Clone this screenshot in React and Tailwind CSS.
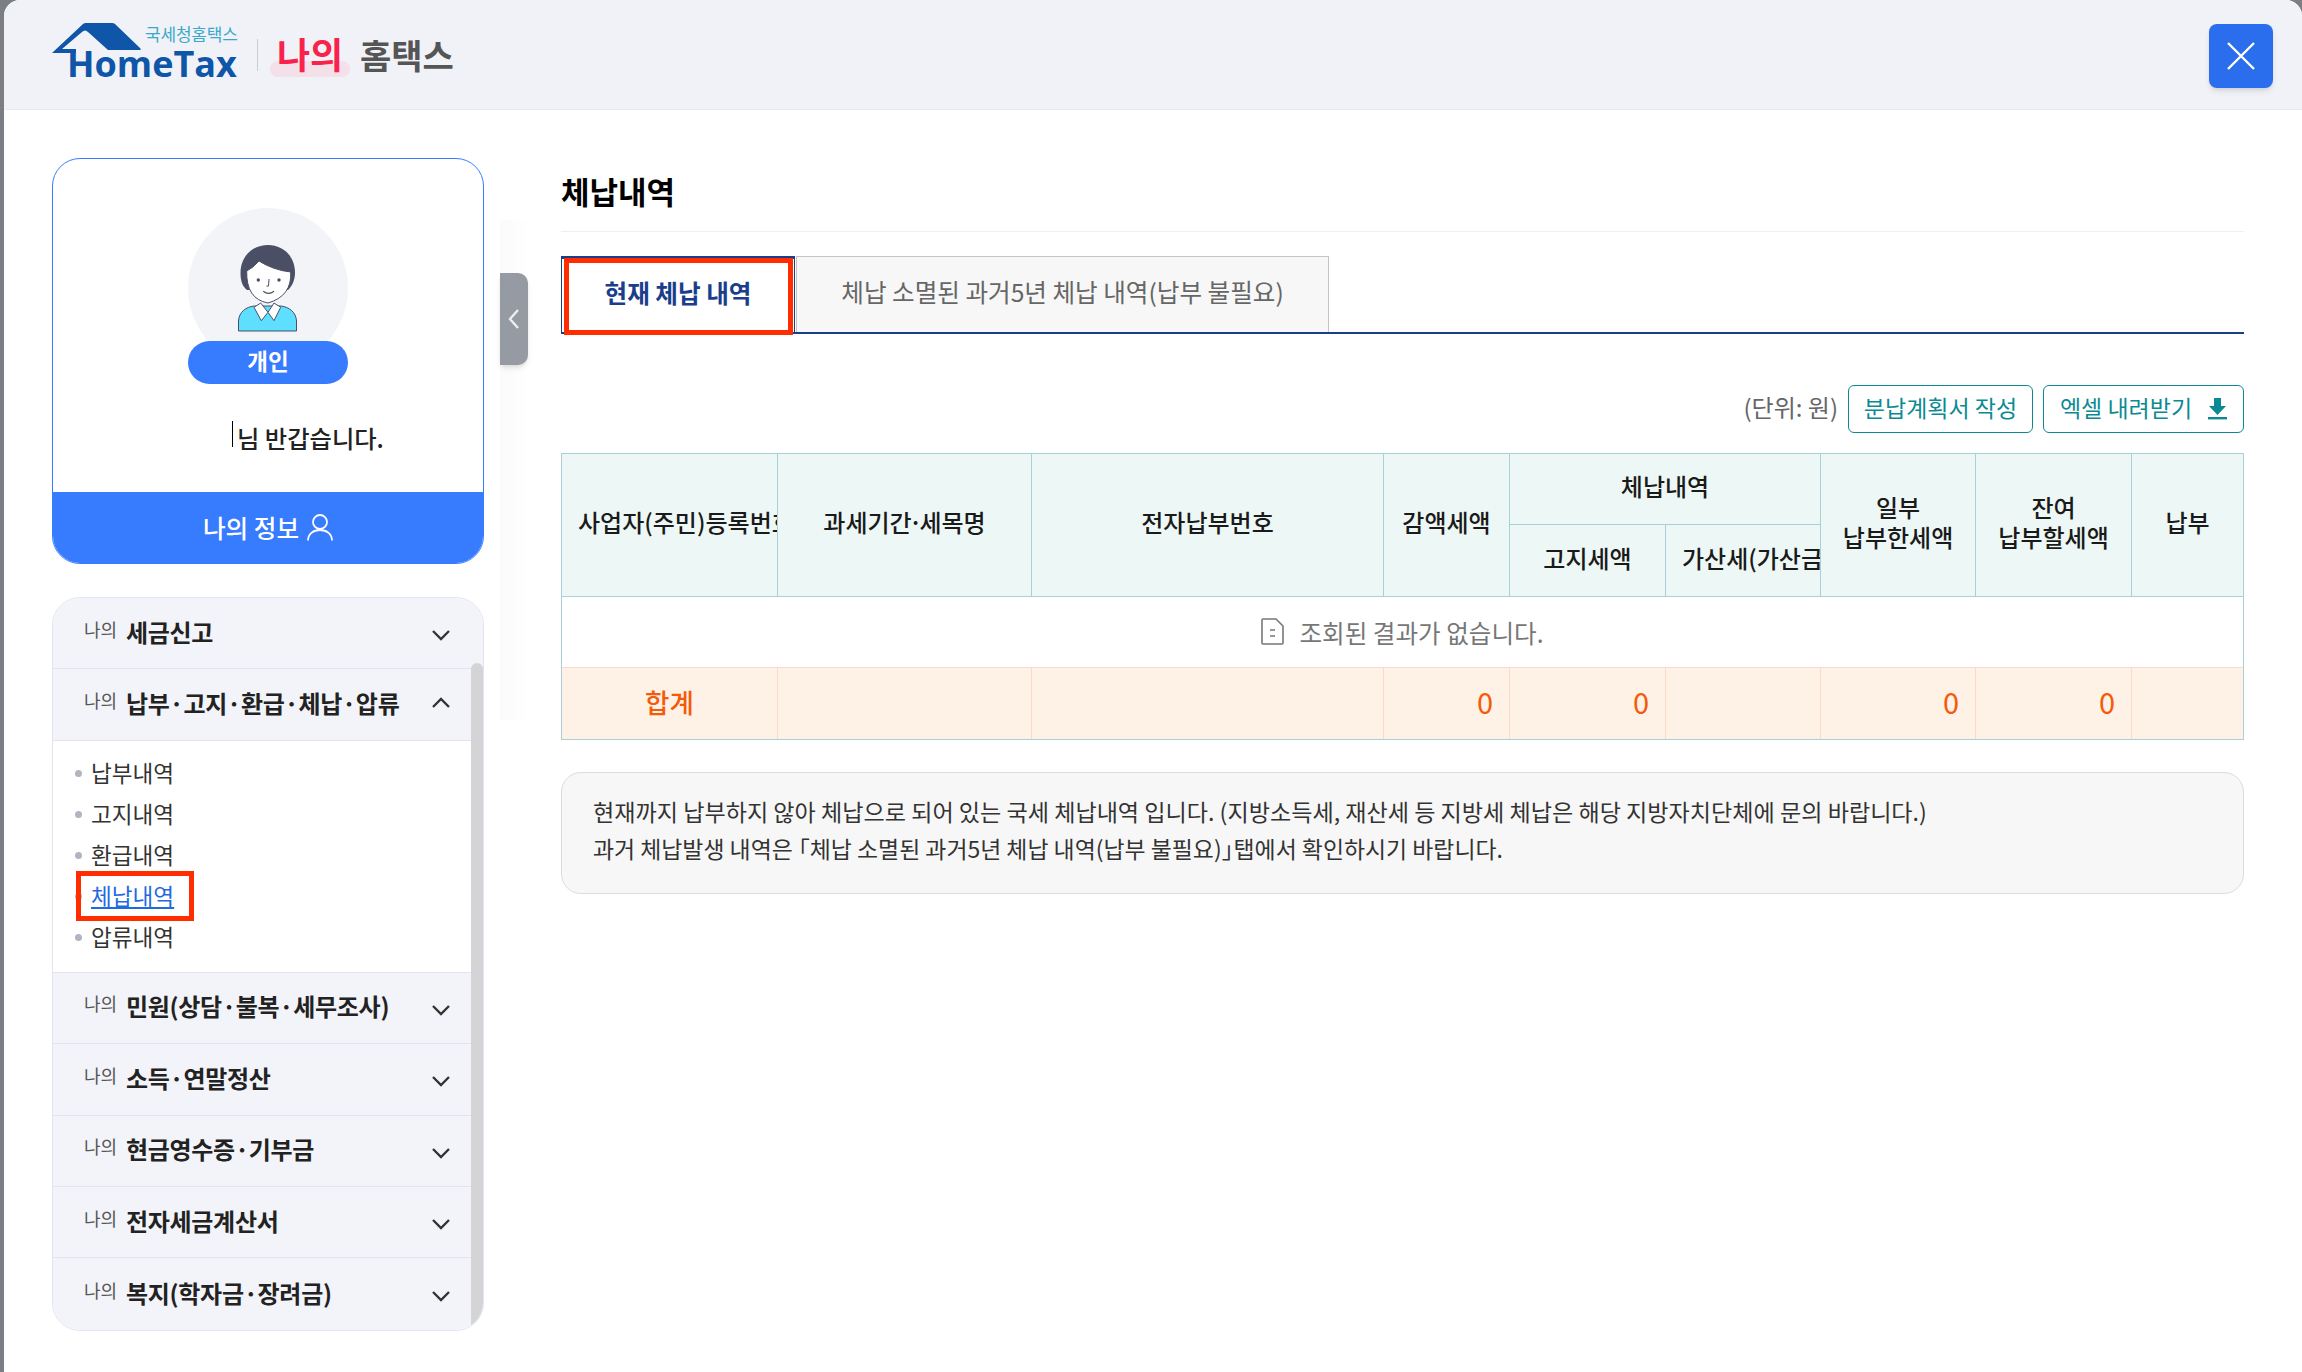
import React from 'react';

const menuBottom = [
  '민원(상담·불복·세무조사)',
  '소득·연말정산',
  '현금영수증·기부금',
  '전자세금계산서',
  '복지(학자금·장려금)',
];
const subItems = ['납부내역', '고지내역', '환급내역', '체납내역', '압류내역'];

const HouseLogo = () => (
  <svg width="92" height="32" viewBox="0 0 92 32" className="absolute left-0 top-0">
    <path
      d="M0 30 L31 1 Q32 0 34 0 H60 Q62 0 63 1 L88 25 Q90 27 87 27 H56 L36 9 Q33 6 30 9 L10 26 H24 V30 Z"
      fill="#0f55a8"
    />
  </svg>
);

const Logo = () => (
  <div className="flex items-center">
    <div className="relative w-[190px] h-[60px] -mt-[3px]">
      <HouseLogo />
      <span className="absolute left-[93px] top-[1px] text-[17px] leading-[20px] tracking-[-0.2px] text-[#3aa9c9] whitespace-nowrap">
        국세청홈택스
      </span>
      <span className="absolute left-[15px] top-[19px] text-[36px] leading-[44px] font-bold text-[#0f55a8] font-['Open_Sans',sans-serif]">
        HomeTax
      </span>
    </div>
    <div className="w-px h-[32px] bg-[#c9ccd2] ml-[15px]" />
    <div className="relative ml-[12px] w-[80px] h-[44px] flex justify-center">
      <div className="absolute left-0 bottom-0 w-[80px] h-[16px] rounded-full bg-[#f3e0e8]" />
      <span className="relative text-[36px] leading-[40px] font-bold text-[#f9224b]">나의</span>
    </div>
    <span className="ml-[10px] text-[34px] leading-[40px] font-bold text-[#555555]">홈택스</span>
  </div>
);

const Avatar = () => (
  <svg width="60" height="88" viewBox="0 0 60 88">
    <path d="M0.5 87 V77 C1 68 8 63 16 62 H43 C51 63 58 68 58.5 77 V87 Z" fill="#5fdfff" stroke="#4a4f66" strokeWidth="1" />
    <path d="M16 63.3 L22.7 59 L30 68.3 L23.3 76.7 Z" fill="#fff" stroke="#4a4f66" strokeWidth="1" />
    <path d="M42.7 63.3 L36 59 L30 68.3 L36 76.7 Z" fill="#fff" stroke="#4a4f66" strokeWidth="1" />
    <path d="M30 1 C15 1 2.5 12 2.5 29 C2.5 38 5 43 9 46 L50 46 C54 42 57 36 57 29 C57 12 45 1 30 1 Z" fill="#4a4f66" />
    <path d="M8.7 27 Q15 24 21 17 Q35 26 52.7 28 Q54 52 30 59 Q8 55 8.7 27 Z" fill="#fff" stroke="#4a4f66" strokeWidth="1" />
    <circle cx="20.3" cy="36" r="1.7" fill="#4a4f66" />
    <circle cx="41" cy="36" r="1.7" fill="#4a4f66" />
    <path d="M31 35 L30.5 42 H28.5" fill="none" stroke="#4a4f66" strokeWidth="1" />
    <path d="M25.3 47.3 Q30.5 51.5 36 47.3" fill="none" stroke="#4a4f66" strokeWidth="1.2" />
  </svg>
);

const UserIcon = () => (
  <svg width="26" height="27" viewBox="0 0 26 27" fill="none" stroke="#fff" strokeWidth="1.8">
    <circle cx="13" cy="8" r="7" />
    <path d="M1 26.5 C1 20 6 16 13 16 C20 16 25 20 25 26.5" />
  </svg>
);

const Chevron = ({ up }) => (
  <svg
    width="18"
    height="11"
    viewBox="0 0 18 11"
    fill="none"
    stroke="#333"
    strokeWidth="2.4"
    className={up ? '-mt-[2px] shrink-0' : 'mt-[8px] shrink-0'}
  >
    <path d={up ? 'M1 10 L9 2 L17 10' : 'M1 1 L9 9 L17 1'} />
  </svg>
);

const MenuRow = ({ title, open, last }) => (
  <div className={last ? 'h-[71.4px] pb-[3px] flex items-center justify-between pl-[31px] pr-[33px] bg-[#f2f4f9]' : 'h-[71.4px] pb-[3px] flex items-center justify-between pl-[31px] pr-[33px] bg-[#f2f4f9] border-b border-[#e2e5f0]'}>
    <div className="flex items-center">
      <span className="text-[18px] leading-[24px] text-[#555555] -mt-[6px] w-[42px] shrink-0">나의</span>
      <span className="text-[24px] leading-[32px] font-bold text-[#222222] whitespace-nowrap tracking-[-0.3px]">{title}</span>
    </div>
    <Chevron up={open} />
  </div>
);

const ProfileCard = () => (
  <div className="h-[406px] flex flex-col border border-[#377bff] rounded-[28px] overflow-hidden">
    <div className="flex flex-col items-center pt-[49px]">
      <div className="w-[160px] h-[160px] rounded-full bg-[#f3f4f8] flex justify-center pt-[36px]">
        <Avatar />
      </div>
      <div className="relative -mt-[27px] w-[160px] h-[43px] pb-[3px] rounded-full bg-[#377bff] flex items-center justify-center text-[22.5px] font-bold text-white">
        개인
      </div>
    </div>
    <div className="flex-1 flex items-center pl-[179px]">
      <span className="w-px h-[26px] bg-black -mt-[8px]" />
      <span className="ml-[4px] text-[24.3px] font-medium text-[#222222] whitespace-nowrap">님 반갑습니다.</span>
    </div>
    <div className="h-[71px] bg-[#377bff] flex items-center justify-center gap-[8px] text-[24.6px] font-medium text-white">
      <span>나의 정보</span>
      <UserIcon />
    </div>
  </div>
);

const Accordion = () => (
  <div className="relative mt-[33px] border border-[#e2e5f0] rounded-[28px] overflow-hidden">
    <MenuRow title="세금신고" />
    <MenuRow title="납부·고지·환급·체납·압류" open />
    <div className="h-[232px] bg-white border-b border-[#e2e5f0] pt-[12px] pl-[22px]">
      {subItems.map((item) => (
        <div key={item} className="relative h-[41px] flex items-center gap-[9px]">
          <span className="w-[7px] h-[7px] rounded-full bg-[#b0b5c0]" />
          {item === '체납내역' ? (
            <>
              <span className="text-[22.6px] text-[#1f6ae0] underline underline-offset-2">{item}</span>
              <div className="absolute left-[1px] top-[-5px] w-[118px] h-[50px] border-[5px] border-[#ff2d00]" />
            </>
          ) : (
            <span className="text-[22.6px] text-[#333333]">{item}</span>
          )}
        </div>
      ))}
    </div>
    {menuBottom.map((title, i) => (
      <MenuRow key={title} title={title} last={i === menuBottom.length - 1} />
    ))}
    {/* scrollbar */}
    <div className="absolute right-0 top-[65px] bottom-0 w-[12px] bg-[#d4d4d6] rounded-t-[6px]" />
  </div>
);

const Sidebar = () => (
  <aside className="relative w-[496px] shrink-0 pl-[48px] pr-[16px] pt-[48px]">
    <ProfileCard />
    <Accordion />
    <div className="absolute left-[496px] top-[110px] w-[30px] h-[500px] bg-gradient-to-r from-[#fbfbfb] to-white" />
    <div className="absolute left-[496px] top-[163px] w-[28px] h-[92px] rounded-r-[10px] bg-[#959aa3] flex items-center justify-center shadow-md">
      <svg width="12" height="20" viewBox="0 0 12 20" fill="none" stroke="#eeeeee" strokeWidth="2.4">
        <path d="M10 1 L2 10 L10 19" />
      </svg>
    </div>
  </aside>
);

const cols = ['w-[216px]', 'w-[254px]', 'w-[352px]', 'w-[126px]', 'w-[156px]', 'w-[155px]', 'w-[155px]', 'w-[156px]', 'w-[111px]'];
const thCls = 'bg-[#edf7f5] border-r border-b border-[#a9d0d6] text-[24px] leading-[30px] font-medium text-[#1a1a1a] px-[16px] pb-[6px] overflow-hidden whitespace-nowrap';
const tdCls = 'bg-[#fef1e6] border-r border-[#fcd9c8] text-[29px] text-[#f55a0a] text-right pr-[16px] pb-[3px]';

const ResultTable = () => (
  <div className="mt-[20px] border border-[#a9d0d6]">
    <table className="w-full table-fixed border-separate border-spacing-0">
      <colgroup>
        {cols.map((c, i) => (
          <col key={i} className={c} />
        ))}
      </colgroup>
      <thead>
        <tr className="h-[71px]">
          <th rowSpan={2} className={thCls}>사업자(주민)등록번호</th>
          <th rowSpan={2} className={thCls}>과세기간<span className="-mx-[3px]">·</span>세목명</th>
          <th rowSpan={2} className={thCls}>전자납부번호</th>
          <th rowSpan={2} className={thCls}>감액세액</th>
          <th colSpan={2} className={thCls}>체납내역</th>
          <th rowSpan={2} className={thCls}>일부<br />납부한세액</th>
          <th rowSpan={2} className={thCls}>잔여<br />납부할세액</th>
          <th rowSpan={2} className="bg-[#edf7f5] border-b border-[#a9d0d6] text-[24px] font-medium text-[#1a1a1a] pb-[6px]">납부</th>
        </tr>
        <tr className="h-[72px]">
          <th className={thCls}>고지세액</th>
          <th className={thCls}>가산세(가산금)</th>
        </tr>
      </thead>
      <tbody>
        <tr className="h-[71px]">
          <td colSpan={9} className="border-b border-[#fcd9c8] text-center">
            <span className="inline-flex items-center gap-[15px] text-[24.6px] text-[#777777]">
              <svg width="23" height="27" viewBox="0 0 23 27" fill="none" stroke="#777777" strokeWidth="1.6">
                <path d="M1 2 Q1 1 2 1 H15 L22 8 V25 Q22 26 21 26 H2 Q1 26 1 25 Z" />
                <path d="M9 12 H14 M9 18 H14" />
              </svg>
              조회된 결과가 없습니다.
            </span>
          </td>
        </tr>
        <tr className="h-[71px]">
          <td className="bg-[#fef1e6] border-r border-[#fcd9c8] text-[26.5px] font-medium text-[#f55a0a] text-center pb-[3px]">합계</td>
          <td className={tdCls} />
          <td className={tdCls} />
          <td className={tdCls}>0</td>
          <td className={tdCls}>0</td>
          <td className={tdCls} />
          <td className={tdCls}>0</td>
          <td className={tdCls}>0</td>
          <td className="bg-[#fef1e6]" />
        </tr>
      </tbody>
    </table>
  </div>
);

const Content = () => (
  <main className="flex-1 min-w-0 pl-[61px] pr-[58px]">
    <div className="h-[122px] pt-[56px] border-b border-[#eef0f5]">
      <h2 className="text-[31px] leading-[50px] font-bold text-black">체납내역</h2>
    </div>

    {/* tabs */}
    <div className="mt-[24px] h-[78px] flex border-b-2 border-[#1a3e8c]">
      <div className="relative w-[234px] pb-[6px] border-t-[3px] border-x border-[#1a3e8c] bg-white flex items-center justify-center text-[24.6px] font-bold text-[#1a3e8c]">
        현재 체납 내역
        <div className="absolute left-[2px] top-[-1px] w-[229px] h-[77px] border-[5px] border-[#ff2d00]" />
      </div>
      <div className="ml-px w-[533px] pb-[6px] border-t border-x border-[#c5c5c5] bg-[#f7f7f7] flex items-center justify-center text-[24.6px] text-[#666666]">
        체납 소멸된 과거5년 체납 내역(납부 불필요)
      </div>
    </div>

    {/* toolbar */}
    <div className="mt-[51px] flex items-center justify-end">
      <span className="text-[24px] pb-[4px] text-[#666666]">(단위: 원)</span>
      <button className="ml-[10px] h-[48px] w-[185px] pb-[4px] rounded-[6px] border border-[#0b8a93] text-[23px] text-[#0b8a93]">
        분납계획서 작성
      </button>
      <button className="ml-[10px] h-[48px] w-[201px] rounded-[6px] border border-[#0b8a93] text-[23px] text-[#0b8a93] flex items-center justify-center gap-[16px]">
        <span className="pb-[4px]">엑셀 내려받기</span>
        <svg width="19" height="22" viewBox="0 0 19 22" fill="#0b8a93">
          <path d="M6 0 H13 V8 H18 L9.5 17 L1 8 H6 Z" />
          <rect x="0" y="19" width="19" height="2.4" />
        </svg>
      </button>
    </div>

    <ResultTable />

    {/* note */}
    <div className="mt-[32px] h-[122px] pb-[6px] rounded-[20px] border border-[#dcdcdc] bg-[#f7f7f7] px-[31px] flex flex-col justify-center text-[23.1px] leading-[37px] text-[#333333]">
      <p>현재까지 납부하지 않아 체납으로 되어 있는 국세 체납내역 입니다. (지방소득세, 재산세 등 지방세 체납은 해당 지방자치단체에 문의 바랍니다.)</p>
      <p className="text-[22.9px]">
        과거 체납발생 내역은 <span className="-ml-[11px]">「</span>체납 소멸된 과거5년 체납 내역(납부 불필요)<span className="-mr-[11px]">」</span>탭에서 확인하시기 바랍니다.
      </p>
    </div>
  </main>
);

export default function App() {
  return (
    <div className="h-screen overflow-hidden bg-[#7b7e83] pl-[4px] font-['Noto_Sans_CJK_KR','Noto_Sans',sans-serif]">
      <div className="h-full rounded-t-[16px] bg-white overflow-hidden">
        <header className="h-[110px] flex items-center justify-between pl-[48px] pr-[29px] bg-[#f0f2f8] border-b border-[#e8eaf2]">
          <Logo />
          <button className="w-[64px] h-[64px] mt-[3px] rounded-[8px] bg-[#2a6ded] flex items-center justify-center shadow-md">
            <svg width="28" height="28" viewBox="0 0 28 28" fill="none" stroke="#fff" strokeWidth="2.4">
              <path d="M1 1 L27 27 M27 1 L1 27" />
            </svg>
          </button>
        </header>
        <div className="flex">
          <Sidebar />
          <Content />
        </div>
      </div>
    </div>
  );
}
